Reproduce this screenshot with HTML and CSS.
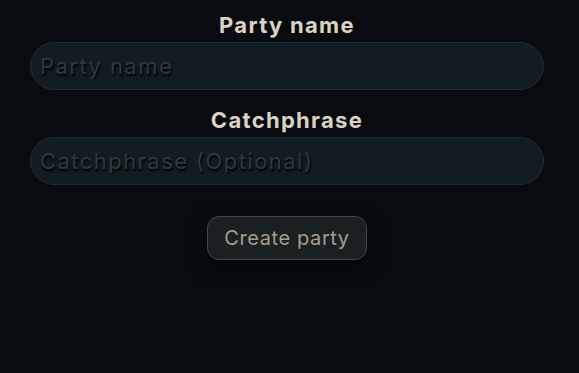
FILE: index.html
```html
<!DOCTYPE html>
<html>
<head>
<meta charset="utf-8">
<link rel="stylesheet" href="styles.css">
</head>
<body>
<form class="party-form">
  <label class="field-label" for="pname">Party name</label>
  <input class="field-input" id="pname" type="text" placeholder="Party name">
  <label class="field-label" for="cphrase">Catchphrase</label>
  <input class="field-input" id="cphrase" type="text" placeholder="Catchphrase (Optional)">
  <div class="actions">
    <button class="create-btn" type="button">Create party</button>
  </div>
</form>
</body>
</html>
```
FILE: styles.css
```css
html, body {
  margin: 0;
  padding: 0;
  background: #080c10;
  height: 100%;
}
.party-form {
  width: 514px;
  margin-left: 30px;
  padding-top: 10px;
  display: flex;
  flex-direction: column;
  font-family: Inter, "Liberation Sans", sans-serif;
}
.field-label {
  text-align: center;
  color: #ddd2c2;
  font-weight: 700;
  font-size: 22px;
  line-height: 30px;
  letter-spacing: 1.3px;
}
.field-input {
  box-sizing: border-box;
  height: 48px;
  margin-top: 2px;
  margin-bottom: 15px;
  border-radius: 24px;
  border: 1.5px solid #1c2c36;
  background: #111c23;
  padding: 0 9px;
  font-family: Inter, "Liberation Sans", sans-serif;
  font-size: 22px;
  letter-spacing: 1.45px;
  color: #c9c2b6;
  outline: none;
}
.field-input::placeholder {
  color: #2e393f;
  text-shadow: 1px 2px 2px #000;
}
.actions {
  display: flex;
  justify-content: center;
  margin-top: 16px;
}
.create-btn {
  width: 160px;
  height: 44px;
  border-radius: 12px;
  border: 1.5px solid #46473f;
  background: #1a1f21;
  color: #a49d92;
  font-family: Inter, "Liberation Sans", sans-serif;
  font-size: 20px;
  letter-spacing: 0.6px;
  box-shadow: 0 6px 20px rgba(0,0,0,0.6);
  padding: 0;
}
```
